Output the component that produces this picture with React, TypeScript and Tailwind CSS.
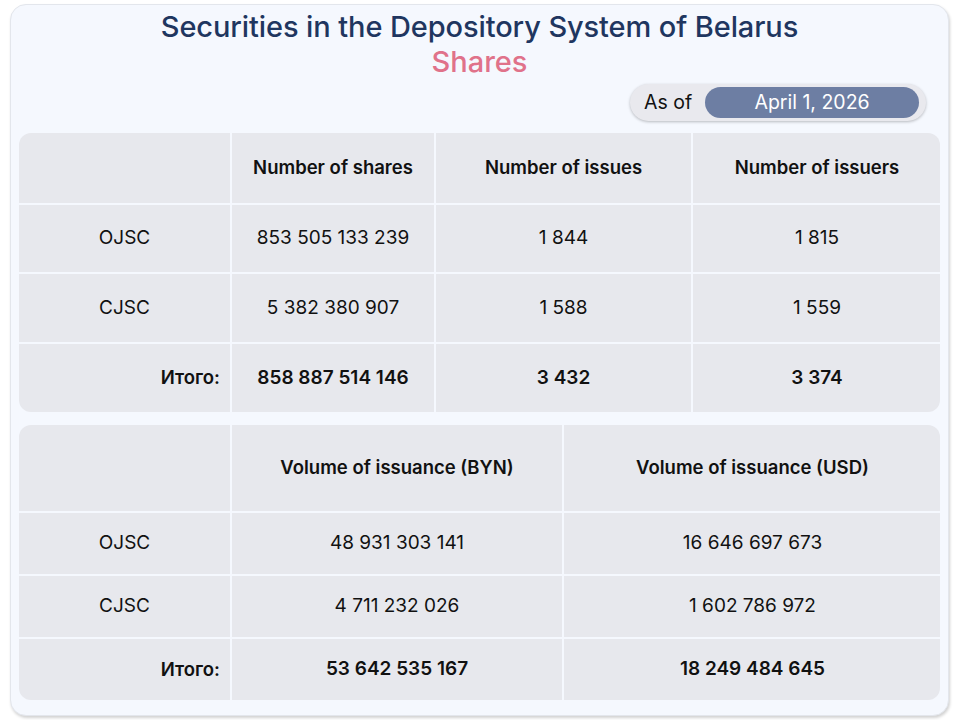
const shares = [
  { label: 'OJSC', values: ['853 505 133 239', '1 844', '1 815'] },
  { label: 'CJSC', values: ['5 382 380 907', '1 588', '1 559'] },
];
const sharesTotal = ['858 887 514 146', '3 432', '3 374'];

const volume = [
  { label: 'OJSC', values: ['48 931 303 141', '16 646 697 673'] },
  { label: 'CJSC', values: ['4 711 232 026', '1 602 786 972'] },
];
const volumeTotal = ['53 642 535 167', '18 249 484 645'];

const cell = 'bg-[#e7e8ed] flex items-center justify-center text-center';
const head = 'font-semibold text-[18.5px]';

export default function App() {
  return (
    <div className="w-[960px] h-[720px] bg-white pt-[4px] pl-[10px] font-['Inter',sans-serif] text-[#111]">
      <div className="w-[939px] h-[712px] bg-[#f5f8fe] rounded-[16px] border border-[#e3e6ec] shadow-[1px_2px_3px_rgba(0,0,0,0.18)] px-[8px] flex flex-col">
        {/* Heading */}
        <div className="flex flex-col items-center pt-[5px]">
          <h1 className="text-[29px] leading-[34px] font-medium text-[#1f3660] tracking-[-0.1px]">
            Securities in the Depository System of Belarus
          </h1>
          <div className="text-[29px] leading-[32px] font-medium mt-[2px] text-[#e0728a]">Shares</div>
        </div>

        {/* Date pill */}
        <div className="flex justify-end pr-[14px] mt-[6px]">
          <div className="w-[296px] h-[37px] rounded-full bg-[#e9e9ee] shadow-[0_1px_3px_rgba(0,0,0,0.25)] flex items-center pl-[14px] pr-[7px] gap-[13px]">
            <span className="text-[19.5px] text-[#111]">As of</span>
            <span className="flex-1 h-[31px] rounded-full bg-[#6d7ea3] text-white text-[19.5px] flex items-center justify-center">
              April 1, 2026
            </span>
          </div>
        </div>

        {/* Table 1 */}
        <div className="mt-[12px] rounded-[12px] overflow-hidden grid grid-cols-[211px_202px_255px_248px] grid-rows-[70px_67px_68px_68px] gap-[2px] text-[19px]">
          <div className={cell} />
          <div className={`${cell} ${head}`}>Number of shares</div>
          <div className={`${cell} ${head}`}>Number of issues</div>
          <div className={`${cell} ${head}`}>Number of issuers</div>
          {shares.map((r) => (
            <Row key={r.label} label={r.label} values={r.values} />
          ))}
          <div className={`${cell} !justify-end pr-[10px] ${head}`}>Итого:</div>
          {sharesTotal.map((v) => (
            <div key={v} className={`${cell} font-semibold`}>{v}</div>
          ))}
        </div>

        {/* Table 2 */}
        <div className="mt-[13px] rounded-[12px] overflow-hidden grid grid-cols-[211px_330px_377px] grid-rows-[86px_61px_61px_61px] gap-[2px] text-[19px]">
          <div className={cell} />
          <div className={`${cell} ${head}`}>Volume of issuance (BYN)</div>
          <div className={`${cell} ${head}`}>Volume of issuance (USD)</div>
          {volume.map((r) => (
            <Row key={r.label} label={r.label} values={r.values} />
          ))}
          <div className={`${cell} !justify-end pr-[10px] ${head}`}>Итого:</div>
          {volumeTotal.map((v) => (
            <div key={v} className={`${cell} font-semibold`}>{v}</div>
          ))}
        </div>
      </div>
    </div>
  );
}

function Row({ label, values }: { label: string; values: string[] }) {
  return (
    <>
      <div className={cell}>{label}</div>
      {values.map((v, i) => (
        <div key={i} className={cell}>{v}</div>
      ))}
    </>
  );
}
